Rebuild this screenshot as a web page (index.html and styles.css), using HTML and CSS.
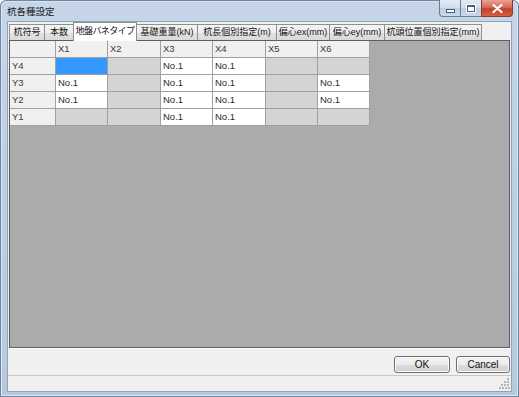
FILE: index.html
```html
<!DOCTYPE html>
<html lang="ja">

<head>
    <meta charset="UTF-8">
    <title>杭各種設定</title>
    <link rel="stylesheet" href="styles.css">
</head>

<body>
    <div class="window">
        <!-- title bar -->
        <div class="titlebar">
            <span class="title">杭各種設定</span>
            <div class="caption-buttons">
                <div class="cap-btn cap-min"><span class="min-icon"></span></div>
                <div class="cap-btn cap-max"><span class="max-icon"></span></div>
                <div class="cap-btn cap-close">
                    <svg width="11" height="9" viewBox="0 0 11 9">
                        <path d="M1.5 1 L9.5 8 M9.5 1 L1.5 8" stroke="#fff" stroke-width="2.2" stroke-linecap="round"/>
                    </svg>
                </div>
            </div>
        </div>

        <div class="client">
            <div class="tabs">
                <div class="tab w35">杭符号</div>
                <div class="tab w29">本数</div>
                <div class="tab active w64">地盤バネタイプ</div>
                <div class="tab w60">基礎重量(kN)</div>
                <div class="tab w79">杭長個別指定(m)</div>
                <div class="tab w53">偏心ex(mm)</div>
                <div class="tab w55">偏心ey(mm)</div>
                <div class="tab w98 last">杭頭位置個別指定(mm)</div>
            </div>

            <div class="panel">
                <div class="grid">
                    <div class="cell head"></div>
                    <div class="cell head">X1</div>
                    <div class="cell head">X2</div>
                    <div class="cell head">X3</div>
                    <div class="cell head">X4</div>
                    <div class="cell head">X5</div>
                    <div class="cell head">X6</div>

                    <div class="cell head">Y4</div>
                    <div class="cell sel"></div>
                    <div class="cell off"></div>
                    <div class="cell">No.1</div>
                    <div class="cell">No.1</div>
                    <div class="cell off"></div>
                    <div class="cell off"></div>

                    <div class="cell head">Y3</div>
                    <div class="cell">No.1</div>
                    <div class="cell off"></div>
                    <div class="cell">No.1</div>
                    <div class="cell">No.1</div>
                    <div class="cell off"></div>
                    <div class="cell">No.1</div>

                    <div class="cell head">Y2</div>
                    <div class="cell">No.1</div>
                    <div class="cell off"></div>
                    <div class="cell">No.1</div>
                    <div class="cell">No.1</div>
                    <div class="cell off"></div>
                    <div class="cell">No.1</div>

                    <div class="cell head">Y1</div>
                    <div class="cell off"></div>
                    <div class="cell off"></div>
                    <div class="cell">No.1</div>
                    <div class="cell">No.1</div>
                    <div class="cell off"></div>
                    <div class="cell off"></div>
                </div>
            </div>

            <div class="buttons">
                <div class="btn btn-ok">OK</div>
                <div class="btn btn-cancel">Cancel</div>
            </div>

            <div class="status">
                <svg class="grip" width="11" height="11" viewBox="0 0 11 11">
                    <g fill="#b4b4b4">
                        <rect x="8" y="0" width="2" height="2"/>
                        <rect x="5" y="3" width="2" height="2"/>
                        <rect x="8" y="3" width="2" height="2"/>
                        <rect x="2" y="6" width="2" height="2"/>
                        <rect x="5" y="6" width="2" height="2"/>
                        <rect x="8" y="6" width="2" height="2"/>
                        <rect x="0" y="9" width="2" height="2"/>
                        <rect x="3" y="9" width="2" height="2"/>
                        <rect x="6" y="9" width="2" height="2"/>
                        <rect x="9" y="9" width="2" height="2"/>
                    </g>
                </svg>
            </div>
        </div>
    </div>
</body>

</html>
```

FILE: styles.css
```css
html,
body {
    margin: 0;
    padding: 0;
}

body {
    width: 519px;
    height: 397px;
    overflow: hidden;
    font-family: "Liberation Sans", "Noto Sans CJK JP", sans-serif;
}

/* window frame (aero glass look) */
.window {
    width: 519px;
    height: 397px;
    box-sizing: border-box;
    padding: 0 8px 6px 8px;
    display: flex;
    flex-direction: column;
    background: linear-gradient(180deg, #c6d6e8 0%, #bdd0e5 40%, #b6cade 100%);
    box-shadow: inset 0 0 0 1px #6f85a0, inset 0 0 0 2px #dbe6f2;
    border-radius: 6px 6px 0 0;
}

.titlebar {
    height: 22px;
    display: flex;
    align-items: flex-start;
    flex-shrink: 0;
}

.title {
    font-family: "Noto Sans CJK JP", sans-serif;
    font-size: 9.5px;
    color: #1a1a1a;
    margin: 5px 0 0 -1px;
    line-height: 13px;
}

.caption-buttons {
    margin-left: auto;
    margin-right: -2px;
    display: flex;
}

.cap-btn {
    height: 17px;
    box-sizing: border-box;
    border: 1px solid #6a7d98;
    border-top: none;
    display: flex;
    align-items: center;
    justify-content: center;
}

.cap-min,
.cap-max {
    width: 21px;
    background: linear-gradient(180deg, #e3ebf5 0%, #d2deec 50%, #bccde2 51%, #c9d9ea 100%);
    border-right: none;
}

.cap-min {
    border-radius: 0 0 0 4px;
}

.min-icon {
    width: 7px;
    height: 2px;
    background: #fff;
    border: 1px solid #4b5d78;
    margin-top: 5px;
}

.max-icon {
    width: 6px;
    height: 4px;
    border: 1px solid #4b5d78;
    border-top-width: 2px;
    background: #fff;
    box-shadow: 0 0 0 1px #fff;
}

.cap-close {
    width: 32px;
    border-color: #8a3a2e;
    border-radius: 0 0 4px 0;
    background: linear-gradient(180deg, #e7a393 0%, #d66a55 45%, #c4412b 55%, #d45f42 100%);
}

/* client area */
.client {
    flex: 1;
    display: flex;
    flex-direction: column;
    background: #f0f0f0;
    box-shadow: 0 0 0 1px #8da3bd;
}

.tabs {
    height: 18px;
    display: flex;
    align-items: flex-end;
    padding-left: 1px;
    flex-shrink: 0;
}

.tab {
    height: 16px;
    box-sizing: border-box;
    border: 1px solid #8e8f8f;
    border-right: none;
    border-bottom: none;
    background: linear-gradient(180deg, #f4f4f4 0%, #eeeeee 50%, #e3e3e3 51%, #d9d9d9 100%);
    font-family: "Liberation Sans", "Noto Sans CJK JP", sans-serif;
    font-size: 9px;
    line-height: 14px;
    color: #111;
    text-align: center;
    white-space: nowrap;
}

.tab.last {
    border-right: 1px solid #8e8f8f;
}

.tab.active {
    height: 19px;
    margin-bottom: -1px;
    background: #fff;
    border-right: 1px solid #8e8f8f;
    margin-right: -1px;
    position: relative;
    z-index: 1;
    letter-spacing: -0.6px;
    line-height: 16px;
}

.w35 { width: 35px; }
.w29 { width: 29px; }
.w64 { width: 64px; }
.w60 { width: 61px; }
.w79 { width: 79px; }
.w53 { width: 53px; }
.w55 { width: 55px; }
.w98 { width: 98px; }

.panel {
    height: 308px;
    margin: 0 1px;
    box-sizing: border-box;
    border: 1px solid #5e5e5e;
    background: #ababab;
    flex-shrink: 0;
}

.grid {
    display: inline-grid;
    grid-template-columns: 45px 51px 52px 51px 52px 51px 51px;
    grid-auto-rows: 16px;
    gap: 1px;
    padding: 0 1px 1px 0;
    background: #a0a0a0;
}

.cell {
    background: #fff;
    font-size: 9.5px;
    color: #2a2a2a;
    line-height: 16px;
    padding-left: 2px;
    white-space: nowrap;
}

.cell.head {
    background: #f0f0f0;
    color: #3a3a3a;
}

.cell.off {
    background: #d4d4d4;
}

.cell.sel {
    background: #3399ff;
}

/* dialog buttons */
.buttons {
    height: 27px;
    display: flex;
    justify-content: flex-end;
    align-items: flex-start;
    gap: 6px;
    padding: 7px 1px 0 0;
    box-sizing: border-box;
    border-top: 1px solid #fff;
    flex-shrink: 0;
}

.btn {
    height: 17px;
    box-sizing: border-box;
    border: 1px solid #707070;
    border-radius: 3px;
    background: linear-gradient(180deg, #f4f4f4 0%, #ebebeb 50%, #dddddd 51%, #cfcfcf 100%);
    box-shadow: inset 0 0 0 1px #fbfbfb;
    font-size: 10px;
    line-height: 15px;
    text-align: center;
    color: #111;
}

.btn-ok {
    width: 56px;
}

.btn-cancel {
    width: 54px;
}

.status {
    flex: 1;
    border-top: 1px solid #c9c9c9;
    background: #f2eeee;
    display: flex;
    justify-content: flex-end;
    align-items: flex-end;
    padding: 0 1px 2px 0;
}
```
